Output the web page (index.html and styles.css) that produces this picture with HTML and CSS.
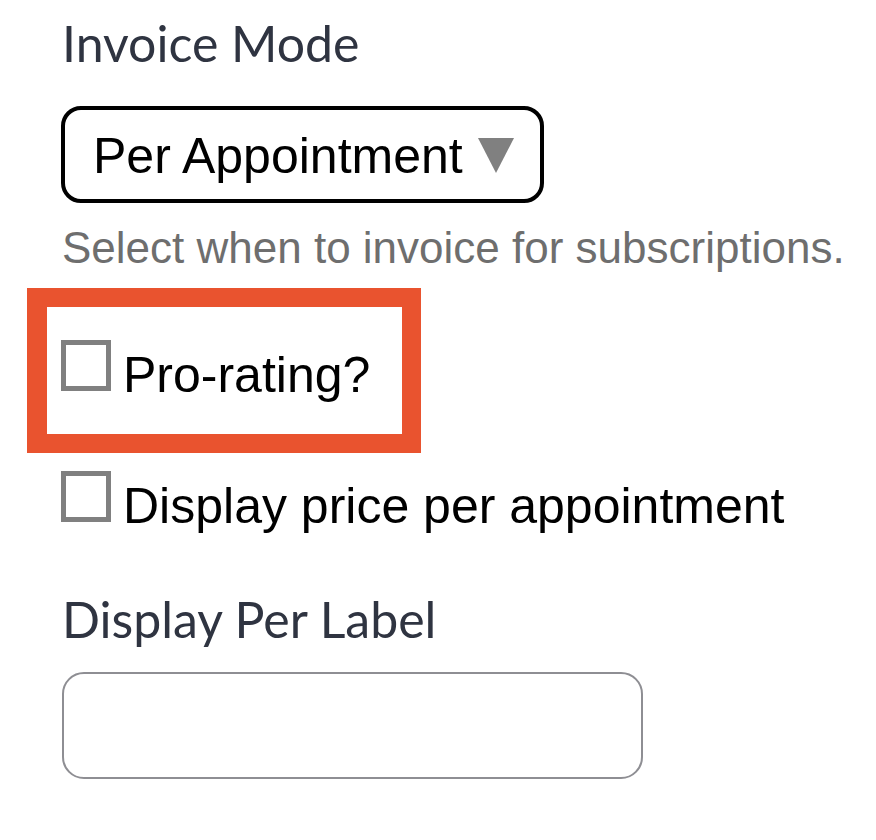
FILE: index.html
```html
<!DOCTYPE html>
<html lang="en">
<head>
<meta charset="utf-8">
<title>Invoice Mode</title>
<link rel="stylesheet" href="styles.css">
</head>
<body>
<div class="form">
  <div class="field-label">Invoice Mode</div>
  <div class="select" role="combobox" aria-expanded="false">
    <span class="select-text">Per Appointment</span>
    <svg class="select-arrow" width="36" height="35" viewBox="0 0 36 35" aria-hidden="true"><polygon points="0,0 36,0 18,35" fill="#808080"/></svg>
  </div>
  <div class="hint">Select when to invoice for subscriptions.</div>
  <div class="highlight">
    <label class="check-row">
      <span class="checkbox"></span>
      <span class="check-text">Pro-rating?</span>
    </label>
  </div>
  <label class="check-row check-row-plain">
    <span class="checkbox"></span>
    <span class="check-text">Display price per appointment</span>
  </label>
  <div class="field-label field-label-second">Display Per Label</div>
  <div class="text-input"></div>
</div>
</body>
</html>
```

FILE: styles.css
```css
html, body {
  margin: 0;
  padding: 0;
  background: #ffffff;
}

.form {
  padding: 15px 0 0 62px;
}

.field-label {
  font-family: Lato, "Open Sans", sans-serif;
  font-size: 50px;
  line-height: 56px;
  color: #2f3441;
}

.field-label-second {
  margin-top: 60px;
}

.select {
  display: inline-flex;
  align-items: flex-start;
  box-sizing: border-box;
  height: 97px;
  margin-top: 35px;
  padding: 21px 26px 0 28px;
  border: 4px solid #000000;
  border-radius: 20px;
  margin-left: -1px;
}

.select-text {
  font-family: "Liberation Sans", Arial, sans-serif;
  font-size: 50px;
  line-height: 50px;
  color: #000000;
}

.select-arrow {
  display: block;
  margin-left: 15px;
  margin-top: 7px;
}

.hint {
  margin-top: 20px;
  font-family: "Liberation Sans", Arial, sans-serif;
  font-size: 44px;
  line-height: 50px;
  color: #6e6e6e;
}

.highlight {
  box-sizing: border-box;
  width: 394px;
  margin: 15px 0 0 -35px;
  padding: 33px 0 34px 15px;
  border: 19px solid #e9532f;
  border-left-width: 20px;
}

.check-row {
  display: flex;
  align-items: flex-start;
  height: 60px;
}

.check-row-plain {
  margin-top: 18px;
  margin-left: -1px;
}

.highlight .check-row {
  margin-left: -1px;
}

.checkbox {
  display: block;
  box-sizing: border-box;
  width: 50px;
  height: 51px;
  border: 5px solid #808080;
  background: #ffffff;
  flex: none;
}

.check-text {
  margin-left: 12px;
  margin-top: 10px;
  font-family: "Liberation Sans", Arial, sans-serif;
  font-size: 50px;
  line-height: 50px;
  color: #000000;
}

.text-input {
  box-sizing: border-box;
  width: 581px;
  height: 107px;
  margin-top: 25px;
  border: 2px solid #8e8e93;
  border-radius: 22px;
}
```
